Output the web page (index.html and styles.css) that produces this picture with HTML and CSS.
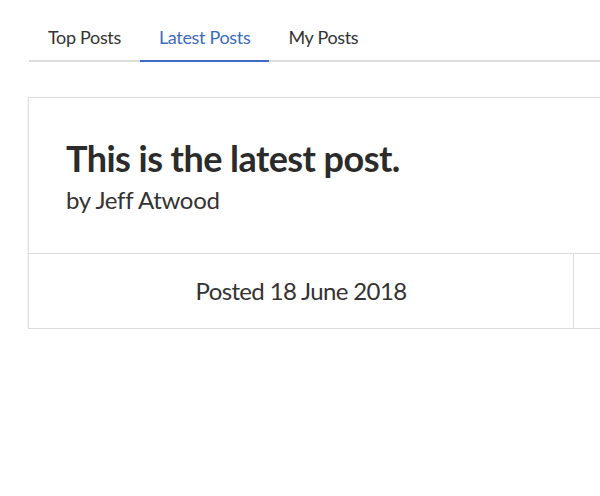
FILE: index.html
```html
<!DOCTYPE html>
<html>
<head>
<meta charset="utf-8">
<link rel="stylesheet" href="styles.css">
</head>
<body>
<nav class="tabs">
  <a class="tab">Top Posts</a>
  <a class="tab active">Latest Posts</a>
  <a class="tab">My Posts</a>
</nav>
<article class="card">
  <header class="card-head">
    <h1 class="title">This is the latest post.</h1>
    <p class="author">by Jeff Atwood</p>
  </header>
  <footer class="card-foot">
    <div class="cell">Posted 18 June 2018</div>
    <div class="cell"></div>
  </footer>
</article>
</body>
</html>
```
FILE: styles.css
```css
html, body {
  margin: 0;
  padding: 0;
  overflow: hidden;
  background: #fff;
}
body {
  font-family: Lato, "Liberation Sans", sans-serif;
  color: #333;
}
.tabs {
  display: flex;
  margin-left: 29px;
  border-bottom: 2px solid #dcdcdc;
  width: 640px;
}
.tab {
  font-size: 18px;
  line-height: 24px;
  letter-spacing: -0.33px;
  padding: 25px 19px 11px;
  margin-bottom: -2px;
  border-bottom: 2px solid transparent;
  color: #333;
}
.tab.active {
  color: #3b6cc0;
  border-bottom-color: #3b6cc0;
}
.card {
  margin: 35px 0 0 28px;
  width: 640px;
  border: 1px solid #dcdcdc;
  box-shadow: 0 1px 3px rgba(0,0,0,0.08);
}
.card-head {
  padding: 38px 37px 38px;
  border-bottom: 1px solid #dcdcdc;
}
.title {
  margin: 0 0 5px;
  font-size: 36px;
  line-height: 44px;
  font-weight: 700;
  letter-spacing: -0.55px;
  color: #2b2b2b;
}
.author {
  margin: 0;
  font-size: 24px;
  line-height: 30px;
  letter-spacing: -0.3px;
  color: #333;
}
.card-foot {
  display: grid;
  grid-template-columns: 545px 1fr;
}
.cell {
  font-size: 24px;
  line-height: 30px;
  letter-spacing: -0.63px;
  padding: 22px 0 22px;
  text-align: center;
  color: #333;
}
.cell:first-child {
  border-right: 1px solid #dcdcdc;
}
```
